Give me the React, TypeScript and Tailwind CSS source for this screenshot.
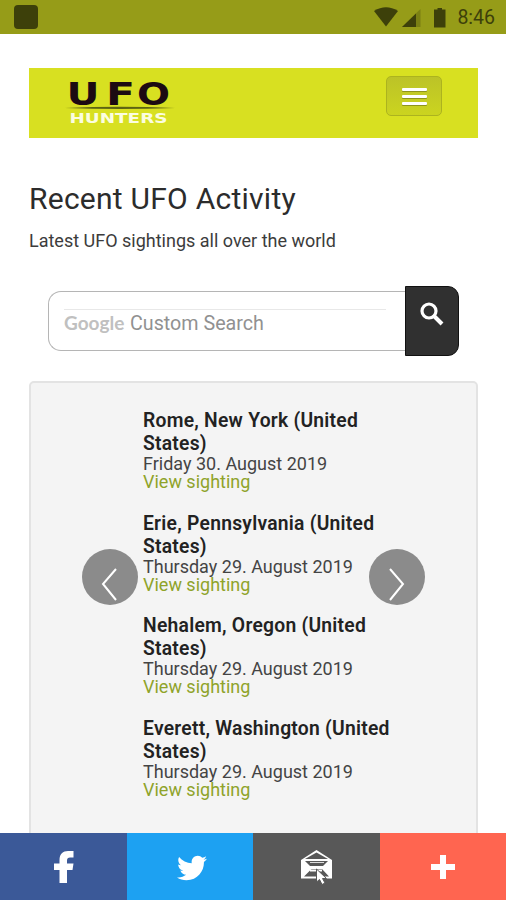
import { FaTwitter } from "react-icons/fa";

const sightings = [
  { place: "Rome, New York (United States)", date: "Friday 30. August 2019" },
  { place: "Erie, Pennsylvania (United States)", date: "Thursday 29. August 2019" },
  { place: "Nehalem, Oregon (United States)", date: "Thursday 29. August 2019" },
  { place: "Everett, Washington (United States)", date: "Thursday 29. August 2019" }
];

const StatusBar = () => (
  <div className="flex h-[34px] shrink-0 items-center bg-[#969c18] pl-[14px] pr-[11px] text-[#3d400a]">
    <div className="h-6 w-6 rounded-[4px] bg-[#3d400a]" />
    <svg className="ml-auto" width="80" height="34" viewBox="0 0 80 34" fill="currentColor">
      <path d="M0 11Q12 3.500 24 11L12 26.500Z" />
      <path d="M28 27L46.500 9V27Z" opacity="0.3" />
      <path d="M28 27L42 13.500V27Z" />
      <path d="M60 9.500H63.500V8H68V9.500H71.500V27.500H60Z" />
    </svg>
    <span className="ml-[3px] pt-[2px] text-[19.5px] leading-8">8:46</span>
  </div>
);

const Logo = () => (
  <svg className="overflow-visible" width="112" height="50" viewBox="0 0 112 50" fontFamily="'DejaVu Sans', sans-serif" fontWeight="700">
    <g fill="#1c0a12" fontSize="32">
      <text x="1.500" y="28.500" textLength="33" lengthAdjust="spacingAndGlyphs">U</text>
      <text x="41" y="28.500" textLength="29" lengthAdjust="spacingAndGlyphs">F</text>
      <text x="72" y="28.500" textLength="33" lengthAdjust="spacingAndGlyphs">O</text>
    </g>
    <path d="M0 32Q55 29.500 110 32Q55 34 0 32Z" fill="#5d6313" />
    <text x="4.500" y="47" fontSize="13.500" fill="#fbfde0" textLength="98" lengthAdjust="spacingAndGlyphs">
      HUNTERS
    </text>
  </svg>
);

const SearchIcon = () => (
  <svg width="26" height="26" viewBox="0 0 26 26" fill="none" stroke="currentColor">
    <circle cx="10" cy="10" r="7" strokeWidth="3.200" />
    <path d="M15 15L23 23" strokeWidth="4" />
  </svg>
);

const FacebookIcon = () => (
  <svg width="20" height="32" viewBox="0 0 20 32" fill="currentColor">
    <path d="M5.500 32V19H0V12.500H5.500V9C5.500 3 9 0 14 0H19.500V6.500H16C14 6.500 13 7.500 13 9.500V12.500H19.500L18.500 19H13V32Z" />
  </svg>
);

const MailIcon = () => (
  <svg width="34" height="36" viewBox="0 0 34 36">
    <path d="M1 11L16.500 1L32 11V29.500H1Z" fill="#fff" />
    <path d="M5 10L16.500 3.500L28 10Z" fill="#585858" />
    <path d="M5 12H28L23 17H10Z" fill="#585858" />
    <path d="M10 13.500H24" stroke="#ddd" />
    <path d="M10 19.500H23M4 27.500L11.500 20H22L29 27.500Z" fill="#585858" />
    <path d="M10 21.500H22" stroke="#fff" strokeWidth="2" />
    <path d="M16.500 20V33L19.500 30.500L22 35.500L25 34L22.500 29.500H26.500Z" fill="#fff" stroke="#585858" />
  </svg>
);

const Arrow = ({ points }: { points: string }) => (
  <svg width="56" height="56" viewBox="0 0 56 56" fill="none" stroke="#fff" strokeWidth="2">
    <polyline points={points} />
  </svg>
);

const App = () => {
  return (
    <div className="flex h-[900px] w-[506px] flex-col overflow-hidden bg-white font-['Roboto',sans-serif] text-[#222]">
      <StatusBar />

      <main className="min-h-0 flex-1 overflow-hidden pl-[29px] pr-[28px] pt-[34px]">
        <header className="flex h-[70px] items-start justify-between bg-[#d8e021] pl-9 pr-9 pt-2">
          <Logo />
          <button className="flex h-10 w-14 flex-col items-center justify-center gap-[4px] rounded-[5px] border border-[#acb31f] bg-gradient-to-b from-[#bcc327] to-[#cbd41f]">
            <span className="h-[3px] w-[25px] rounded-[1px] bg-white shadow-[0_1px_0_#8e941c]" />
            <span className="h-[3px] w-[25px] rounded-[1px] bg-white shadow-[0_1px_0_#8e941c]" />
            <span className="h-[3px] w-[25px] rounded-[1px] bg-white shadow-[0_1px_0_#8e941c]" />
          </button>
        </header>

        <h1 className="mt-[42px] whitespace-nowrap text-[30px] font-normal leading-[38px] tracking-[0.250px] text-[#2c2c2c]">Recent UFO Activity</h1>
        <p className="mt-[11px] whitespace-nowrap text-[18px] leading-6 text-[#3c3c3c]">Latest UFO sightings all over the world</p>

        <form className="mt-[33px] flex items-center pl-[19px]">
          <div className="h-[60px] w-[357px] rounded-l-[13px] border border-r-0 border-[#b5b5b5] pl-[15px] pt-[17px]">
            <div className="flex h-7 w-[322px] items-start border-t border-[#e8e8e8] text-[#919191]">
              <span className="w-[66px] whitespace-nowrap font-['Lato',sans-serif] text-[19px] font-bold leading-[25px] text-[#c0c0c0]">Google</span>
              <span className="whitespace-nowrap text-[19.700px] leading-[27px]">Custom Search</span>
            </div>
          </div>
          <button className="flex h-[70px] w-[54px] items-start justify-center rounded-r-[11px] border border-[#111] bg-[#303030] pt-[14px] text-white">
            <SearchIcon />
          </button>
        </form>

        <section className="relative mt-[25px] h-[480px] rounded-[5px] border-2 border-[#e3e3e3] bg-[#f4f4f4] pl-[112px] pt-[26px]">
          {sightings.map((item) => (
            <article key={item.place} className="h-[102.700px] w-[260px]">
              <h2 className="text-[19.300px] font-semibold leading-[23px] tracking-[0.250px]">{item.place}</h2>
              <p className="-mt-px whitespace-nowrap text-[18px] leading-[19px] text-[#444]">{item.date}</p>
              <a className="block text-[18px] leading-[18px] text-[#8fa32a]">View sighting</a>
            </article>
          ))}
          <button className="absolute left-[51px] top-[166px] h-14 w-14 rounded-full bg-[#8b8b8b]">
            <Arrow points="34,20 21,35 34,51" />
          </button>
          <button className="absolute left-[338px] top-[166px] h-14 w-14 rounded-full bg-[#8b8b8b]">
            <Arrow points="21,20 34,35 21,51" />
          </button>
        </section>
      </main>

      <footer className="grid h-[67px] shrink-0 grid-cols-[127px_126px_127px_126px] text-white">
        <a className="flex items-center justify-center bg-[#3b5998]">
          <FacebookIcon />
        </a>
        <a className="flex items-center justify-center bg-[#1da1f2] pl-1 pt-[2px]">
          <FaTwitter size={30} />
        </a>
        <a className="flex items-center justify-center bg-[#585858]">
          <MailIcon />
        </a>
        <a className="flex items-center justify-center bg-[#ff6550]">
          <svg width="24" height="24" viewBox="0 0 24 24" fill="currentColor">
            <path d="M9 0H15V9H24V15H15V24H9V15H0V9H9Z" />
          </svg>
        </a>
      </footer>
    </div>
  );
};

export default App;
